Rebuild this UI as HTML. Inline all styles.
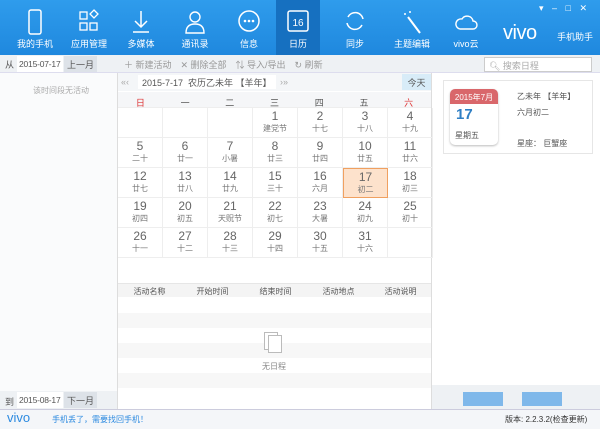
<!DOCTYPE html>
<html><head><meta charset="utf-8"><style>
*{margin:0;padding:0;box-sizing:border-box}
body{width:600px;height:429px;overflow:hidden;font-family:"Liberation Sans","Noto Sans CJK SC",sans-serif;background:#fff;position:relative;font-size:9px;color:#555;white-space:nowrap}
.hdr{position:absolute;left:0;top:0;width:600px;height:55px;background:linear-gradient(#2f9cec,#1f88de)}
.nav{position:absolute;top:0;height:55px;width:50px;text-align:center;color:#fff;font-size:9px}
.nav .lb{position:absolute;top:37px;left:0;right:0}
.nav svg{position:absolute;top:9px;left:13px}
.act{background:#1670c0}
.a{position:absolute}
.tb{position:absolute;left:0;top:55px;width:600px;height:18px;background:#eef1f4;border-bottom:1px solid #dde}
.cal{position:absolute;left:117px;top:73px;width:315px;height:337px;border-left:1px solid #ddd;border-right:1px solid #ddd}
.cell{position:absolute;width:45px;height:30px;text-align:center;border-right:1px solid #eee;border-bottom:1px solid #eee}
.cell b{display:block;font-weight:normal;font-size:12px;color:#666;margin-top:2px;line-height:13px}
.cell i{display:block;font-style:normal;font-size:8px;color:#777;line-height:11px}
.df{position:absolute;width:46px;height:16px;background:#fff;font-size:8.5px;padding:3px 2px;letter-spacing:-0.2px}
</style></head><body>
<div class="hdr"></div>
<div class="nav" style="left:10px"><svg width="24" height="26"><rect x="6" y="1" width="12" height="24" rx="2" fill="none" stroke="#fff" stroke-width="1.5"/></svg><div class="lb">我的手机</div></div>
<div class="nav" style="left:64px"><svg width="24" height="26"><rect x="3" y="3" width="7" height="7" fill="none" stroke="#fff" stroke-width="1.3"/><path d="M17 1l4 4-4 4-4-4z" fill="none" stroke="#fff" stroke-width="1.3"/><rect x="3" y="14" width="7" height="7" fill="none" stroke="#fff" stroke-width="1.3"/><rect x="13" y="14" width="7" height="7" fill="none" stroke="#fff" stroke-width="1.3"/></svg><div class="lb">应用管理</div></div>
<div class="nav" style="left:116px"><svg width="24" height="26"><path d="M12 2v16M6 12l6 6 6-6M4 23h16" fill="none" stroke="#fff" stroke-width="1.5"/></svg><div class="lb">多媒体</div></div>
<div class="nav" style="left:170px"><svg width="24" height="26"><circle cx="12" cy="8" r="5" fill="none" stroke="#fff" stroke-width="1.4"/><path d="M3 24c0-7 4-9 9-9s9 2 9 9z" fill="none" stroke="#fff" stroke-width="1.4"/></svg><div class="lb">通讯录</div></div>
<div class="nav" style="left:224px"><svg width="24" height="26"><circle cx="12" cy="12" r="10" fill="none" stroke="#fff" stroke-width="1.5"/><circle cx="8" cy="12" r="1.3" fill="#fff"/><circle cx="12" cy="12" r="1.3" fill="#fff"/><circle cx="16" cy="12" r="1.3" fill="#fff"/></svg><div class="lb">信息</div></div>
<div class="nav act" style="left:276px;width:44px"><svg width="24" height="26" style="left:10px"><rect x="2" y="2" width="20" height="20" rx="2" fill="none" stroke="#fff" stroke-width="1.5"/><text x="12" y="17" font-size="10" fill="#fff" text-anchor="middle" font-family="Liberation Sans">16</text></svg><div class="lb">日历</div></div>
<div class="nav" style="left:330px"><svg width="24" height="26"><path d="M20 10a8 8 0 0 0-15-2M4 14a8 8 0 0 0 15 2" fill="none" stroke="#fff" stroke-width="1.5"/></svg><div class="lb">同步</div></div>
<div class="nav" style="left:387px"><svg width="24" height="26"><path d="M8 8l12 16" stroke="#fff" stroke-width="2"/><circle cx="5" cy="5" r="1" fill="#fff"/><circle cx="10" cy="3" r="1" fill="#fff"/></svg><div class="lb">主题编辑</div></div>
<div class="nav" style="left:441px"><svg width="24" height="26"><path d="M6 20h13a4 4 0 0 0 0-8 6 6 0 0 0-11-2 5 5 0 0 0-2 10z" fill="none" stroke="#fff" stroke-width="1.4"/></svg><div class="lb">vivo云</div></div>
<div class="a" style="left:503px;top:22px;color:#fff;font-size:20px;letter-spacing:-0.5px">vivo</div>
<div class="a" style="left:557px;top:30px;color:#fff;font-size:9px">手机助手</div>
<div class="a" style="left:539px;top:3px;color:#fff;font-size:9px;word-spacing:6px">▾ – □ ✕</div>
<div class="tb"></div>
<div class="a" style="left:5px;top:58px">从</div>
<div class="df" style="left:17px;top:56px">2015-07-17</div>
<div class="a" style="left:64px;top:56px;width:33px;height:16px;background:#dde2e8;text-align:center;padding-top:2px">上一月</div>
<div class="a" style="left:124px;top:58px;color:#999">＋ 新建活动　✕ 删除全部　⇅ 导入/导出　↻ 刷新</div>
<div class="a" style="left:484px;top:57px;width:108px;height:15px;border:1px solid #ccc;background:#fff;color:#aaa;padding:1px 4px">🔍︎ 搜索日程</div>
<div class="a" style="left:0;top:73px;width:117px;height:318px;background:#fafbfc"></div>
<div class="a" style="left:33px;top:85px;color:#aaa;font-size:8px">该时间段无活动</div>
<div class="cal">
<div class="a" style="left:0;top:0;width:313px;height:18px;background:#f4f6f8"></div>
<div class="a" style="left:3px;top:4px;color:#aaa">«‹</div>
<div class="a" style="left:20px;top:2px;width:138px;height:14px;background:#fff;padding:1px 4px;color:#555">2015-7-17&nbsp; 农历乙未年 【羊年】</div>
<div class="a" style="left:162px;top:4px;color:#aaa">›»</div>
<div class="a" style="left:284px;top:1px;width:29px;height:16px;background:#d8ecf8;text-align:center;padding-top:2px">今天</div>
<div class="a" style="left:0;top:19px;width:313px;height:16px;background:#f5f6f8;border-bottom:1px solid #eee"></div>
<div class="a" style="left:0;top:23px;width:313px;display:flex"><span style="width:45px;text-align:center;color:#d33">日</span><span style="width:45px;text-align:center">一</span><span style="width:45px;text-align:center">二</span><span style="width:45px;text-align:center">三</span><span style="width:45px;text-align:center">四</span><span style="width:45px;text-align:center">五</span><span style="width:45px;text-align:center;color:#d33">六</span></div>
<div id="g"></div>
<div class="a" style="left:0;top:210px;width:313px;height:14px;background:#f4f4f4;border-top:1px solid #e6e6e6;display:flex;padding-top:2px;font-size:8px"><span style="width:63px;text-align:center">活动名称</span><span style="width:63px;text-align:center">开始时间</span><span style="width:63px;text-align:center">结束时间</span><span style="width:63px;text-align:center">活动地点</span><span style="width:61px;text-align:center">活动说明</span></div>
<div class="a" style="left:0;top:240px;width:313px;height:15px;background:#f7f7f7"></div>
<div class="a" style="left:0;top:270px;width:313px;height:15px;background:#f7f7f7"></div>
<div class="a" style="left:0;top:300px;width:313px;height:15px;background:#f7f7f7"></div>
<div class="a" style="left:146px;top:259px;width:14px;height:18px;border:1px solid #bbb;background:#fff"></div>
<div class="a" style="left:150px;top:262px;width:14px;height:18px;border:1px solid #bbb;background:#fff"></div>
<div class="a" style="left:144px;top:288px;color:#888;font-size:8px">无日程</div>
</div>
<div class="a" style="left:443px;top:80px;width:150px;height:74px;border:1px solid #e6e6e6"></div>
<div class="a" style="left:450px;top:89px;width:48px;height:56px;border-radius:5px;background:#fff;box-shadow:0 1px 2px #bbb"></div>
<div class="a" style="left:450px;top:89px;width:48px;height:15px;border-radius:5px 5px 0 0;background:#d9676b;color:#fff;font-size:8px;text-align:center;padding-top:3px">2015年7月</div>
<div class="a" style="left:456px;top:106px;color:#2f7fc4;font-size:15px;font-weight:bold">17</div>
<div class="a" style="left:455px;top:130px;font-size:8px">星期五</div>
<div class="a" style="left:517px;top:91px;font-size:8px">乙未年 【羊年】</div>
<div class="a" style="left:517px;top:107px;font-size:8px">六月初二</div>
<div class="a" style="left:517px;top:138px;font-size:8px">星座： 巨蟹座</div>
<div class="a" style="left:0;top:391px;width:117px;height:18px;background:#eef1f4"></div>
<div class="a" style="left:5px;top:395px">到</div>
<div class="df" style="left:17px;top:392px">2015-08-17</div>
<div class="a" style="left:64px;top:392px;width:33px;height:16px;background:#dde2e8;text-align:center;padding-top:2px">下一月</div>
<div class="a" style="left:432px;top:385px;width:168px;height:24px;background:#eef1f4"></div>
<div class="a" style="left:463px;top:392px;width:40px;height:14px;background:#7fb8ea"></div>
<div class="a" style="left:522px;top:392px;width:40px;height:14px;background:#7fb8ea"></div>
<div class="a" style="left:0;top:409px;width:600px;height:20px;background:#f4f6f9;border-top:1px solid #ccd"></div>
<div class="a" style="left:7px;top:410px;color:#2c8ae0;font-size:13px">vivo</div>
<div class="a" style="left:52px;top:414px;color:#2c8ae0;font-size:8px">手机丢了，需要找回手机！</div>
<div class="a" style="left:505px;top:414px;color:#333;font-size:8px">版本: 2.2.3.2(检查更新)</div>
<script>
var d=[["",""],["",""],["",""],["1","建党节"],["2","十七"],["3","十八"],["4","十九"],
["5","二十"],["6","廿一"],["7","小暑"],["8","廿三"],["9","廿四"],["10","廿五"],["11","廿六"],
["12","廿七"],["13","廿八"],["14","廿九"],["15","三十"],["16","六月"],["17","初二"],["18","初三"],
["19","初四"],["20","初五"],["21","天贶节"],["22","初七"],["23","大暑"],["24","初九"],["25","初十"],
["26","十一"],["27","十二"],["28","十三"],["29","十四"],["30","十五"],["31","十六"],["",""]];
var h="";for(var k=0;k<35;k++){var r=Math.floor(k/7),c=k%7;var st="left:"+(c*45)+"px;top:"+(35+r*30)+"px;";
if(d[k][0]=="17")st+="background:#fde2cc;border:1px solid #f0a060;";
h+='<div class="cell" style="'+st+'"><b>'+(d[k][0]||"&nbsp;")+'</b><i>'+(d[k][1]||"")+'</i></div>';}
document.getElementById("g").innerHTML=h;
</script>
</body></html>
